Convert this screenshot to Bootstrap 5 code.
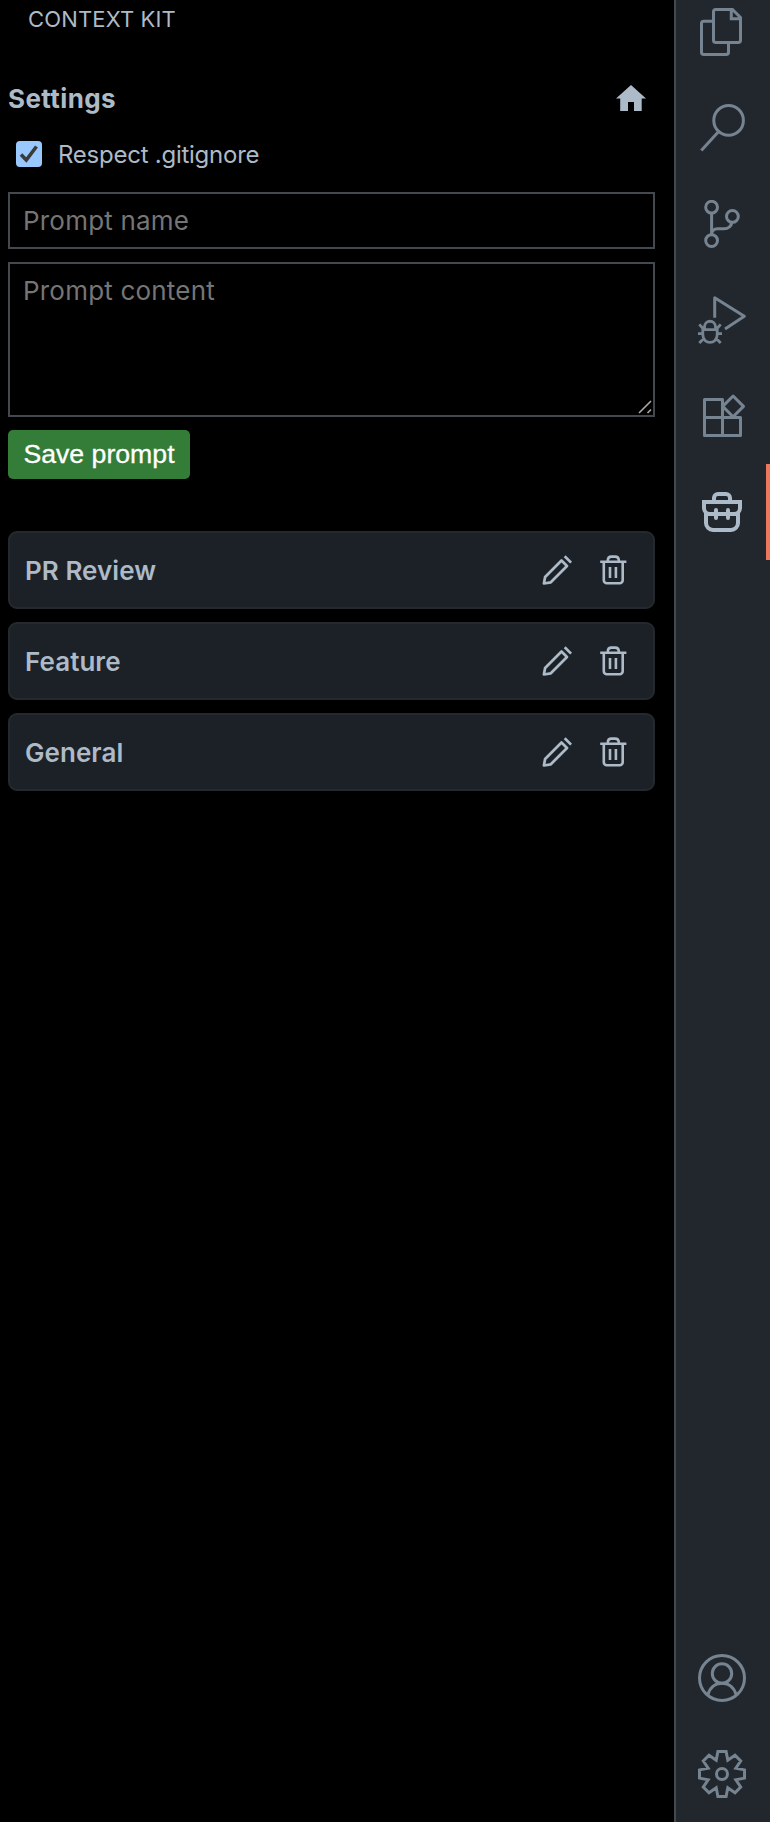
<!DOCTYPE html>
<html lang="en" data-bs-theme="dark">
<head>
<meta charset="utf-8">
<meta name="viewport" content="width=device-width, initial-scale=1">
<title>Context Kit</title>
<link href="https://cdn.jsdelivr.net/npm/bootstrap@5.3.0/dist/css/bootstrap.min.css" rel="stylesheet">
<style>
body { background: #000; color: #adbac7; font-family: Inter, "Liberation Sans", sans-serif; font-size: 26px; line-height: 32px; }
svg { display: block; flex: none; fill: none; stroke: currentColor; }
.panel-title { font-size: 22px; line-height: 38px; padding-left: 28px; letter-spacing: .15px; font-weight: 400; color: #adbac7; }
.panel-body { padding: 40px 19px 0 8px; }
.heading { font-size: 26px; line-height: 38px; padding-top: 2px; font-weight: 700; letter-spacing: .4px; color: #adbac7; }
.heading-row { height: 40px; padding-right: 9px; }
.check-row { height: 26px; margin: 23px 0 25px 8px; gap: 16px; }
.check-row .form-check-input { width: 26px; height: 26px; border: 0; border-radius: 4px; background-color: #99c8ff; background-size: 26px;
  background-image: url("data:image/svg+xml,%3Csvg xmlns='http://www.w3.org/2000/svg' viewBox='0 0 26 26'%3E%3Cpath d='M5 13.5l5.3 5.5L20.5 5.5' fill='none' stroke='%233b3b3b' stroke-width='3.6'/%3E%3C/svg%3E") !important; }
.check-row label { font-size: 24px; line-height: 26px; padding-top: 2px; letter-spacing: -.25px; }
.field.form-control { background: #000; border: 2px solid #444950; border-radius: 0; padding: 0 13px; font-size: 26px; line-height: 32px; color: #adbac7; resize: none; letter-spacing: .2px; }
.field::placeholder { color: #757575; opacity: 1; }
input.field.form-control { height: 57px; margin-bottom: 13px; }
textarea.field.form-control { height: 155px; padding-top: 11px; display: block; }
.grip { right: 3px; bottom: 3px; color: #aaa; }
.save.btn { margin-top: 13px; height: 49px; width: 182px; padding: 0 0 2px; border: 0; border-radius: 5px; background: #347d39; color: #fff; font: 26.67px/46px "Liberation Sans", Arial, sans-serif; -webkit-text-stroke: .3px #fff; }
.prompts { margin-top: 52px; gap: 13px; }
.prompt-card.card { height: 78px; border: 2px solid #25292e; border-radius: 9px; background: #1c2128; color: #adbac7; padding: 0 24px 0 15px; }
.prompt-name { font-weight: 600; letter-spacing: .05px; padding-top: 2px; }
.activity { width: 96px; background: #22272e; border-left: 2px solid #444950; color: #768390; }
.activity-top { margin-top: -16px; }
.item { height: 96px; padding-left: 22px; }
.item.active { color: #adbac7; border-right: 4px solid #ec775c; }
</style>
</head>
<body>
<div class="d-flex vh-100 overflow-hidden">
  <main class="flex-grow-1">
    <h1 class="panel-title m-0">CONTEXT KIT</h1>
    <div class="panel-body">
      <div class="heading-row d-flex align-items-center justify-content-between">
        <h2 class="heading m-0">Settings</h2>
        <svg width="30" height="26" viewBox="0 0 30 26"><path fill="currentColor" stroke="none" d="M15 0L30 13.5H25.7V26H18V17H12V26H4.2V13.5H0Z"/></svg>
      </div>
      <div class="check-row d-flex align-items-center">
        <input class="form-check-input m-0" type="checkbox" id="ignore" checked>
        <label for="ignore">Respect .gitignore</label>
      </div>
      <input class="field form-control" placeholder="Prompt name">
      <div class="position-relative">
        <textarea class="field form-control" placeholder="Prompt content"></textarea>
        <svg class="grip position-absolute" width="14" height="14" viewBox="0 0 14 14" stroke-width="1.6"><path d="M1 13L13 1M9.5 13L13 9.5"/></svg>
      </div>
      <button class="save btn d-block">Save prompt</button>
      <div class="prompts d-flex flex-column">
        <div class="prompt-card card flex-row align-items-center justify-content-between"><span class="prompt-name">PR Review</span><span class="d-flex actions"><svg width="32" height="32"><use href="#pencil"/></svg><svg class="ms-4" width="32" height="32"><use href="#trash"/></svg></span></div>
        <div class="prompt-card card flex-row align-items-center justify-content-between"><span class="prompt-name">Feature</span><span class="d-flex actions"><svg width="32" height="32"><use href="#pencil"/></svg><svg class="ms-4" width="32" height="32"><use href="#trash"/></svg></span></div>
        <div class="prompt-card card flex-row align-items-center justify-content-between"><span class="prompt-name">General</span><span class="d-flex actions"><svg width="32" height="32"><use href="#pencil"/></svg><svg class="ms-4" width="32" height="32"><use href="#trash"/></svg></span></div>
      </div>
    </div>
  </main>
  <nav class="activity d-flex flex-column justify-content-between flex-shrink-0">
    <div class="activity-top">
      <div class="item d-flex align-items-center"><svg width="48" height="48" stroke-width="3"><path d="M17.8 1.5H34.5L42.5 9.5V32.3A2.3 2.3 0 0 1 40.2 34.6H17.8A2.3 2.3 0 0 1 15.5 32.3V3.8A2.3 2.3 0 0 1 17.8 1.5ZM33.3 1.5V10.7H42.5M15.5 13.3H5.8A2.3 2.3 0 0 0 3.5 15.6V44.2A2.3 2.3 0 0 0 5.8 46.5H28.2A2.3 2.3 0 0 0 30.5 44.2V34.6"/></svg></div>
      <div class="item d-flex align-items-center"><svg width="48" height="48" stroke-width="3"><circle cx="30.6" cy="16.4" r="14.8"/><path d="M20.2 28L3.3 46.4"/></svg></div>
      <div class="item d-flex align-items-center"><svg width="48" height="48" stroke-width="3"><circle cx="13.6" cy="7.2" r="5.9"/><circle cx="34.4" cy="16.4" r="5.9"/><circle cx="13.6" cy="40.6" r="5.9"/><path d="M13.6 13V34.7C13.6 31 16 28.7 19.5 28.7H26C30.5 28.7 33 26.5 34 22.3"/></svg></div>
      <div class="item d-flex align-items-center"><svg width="48" height="48" stroke-width="3"><path stroke-linejoin="round" d="M16.7 21.8V1.8L46.3 20.3L27 33"/><path stroke-width="2.8" d="M4.8 33.6H19.2V38.5C19.2 49 4.8 49 4.800 38.500ZM6.5 33.600V31C6.500 23.300 17.500 23.300 17.500 31V33.600M5 32.500L1.300 28.400M19 32.500L22.700 28.400M0 37.700H5M19 37.700H24M6 42.300L1.300 47M18 42.300L22.700 47"/></svg></div>
      <div class="item d-flex align-items-center"><svg width="48" height="48" stroke-width="3" stroke-linejoin="round"><path d="M6.5 7.5H24.5V43.5H6.5ZM6.5 25.5H42.5V43.5H24.5M35.1 4L45.5 14.4L35.1 24.8L24.7 14.4Z"/></svg></div>
      <div class="item active d-flex align-items-center"><svg width="48" height="48" stroke-width="4"><path d="M16 13V10A4 4 0 0 1 20 6H28A4 4 0 0 1 32 10V13M6 14H42V20A6 6 0 0 1 36 26H12A6 6 0 0 1 6 20ZM8 25V35A7 7 0 0 0 15 42H33A7 7 0 0 0 40 35V25"/><path stroke-linecap="round" d="M18 22V30M30 22V30"/></svg></div>
    </div>
    <div>
      <div class="item d-flex align-items-center"><svg width="48" height="48" stroke-width="3"><circle cx="24" cy="24" r="22.5"/><circle cx="24" cy="19.5" r="9.7"/><path d="M9.8 41.3C11.5 33.5 17 29.2 24 29.2S36.5 33.5 38.2 41.3"/></svg></div>
      <div class="item d-flex align-items-center"><svg width="48" height="48" stroke-width="3"><circle cx="24" cy="24" r="5.5"/><path d="M19.9 1.5H28.1L29.8 10.2L37 5.3L42.7 11L37.8 18.2L46.5 19.9V28.1L37.8 29.8L42.7 37L37 42.7L29.8 37.8L28.1 46.5H19.9L18.2 37.8L11 42.7L5.3 37L10.2 29.8L1.5 28.1V19.9L10.2 18.2L5.3 11L11 5.3L18.2 10.2Z"/></svg></div>
    </div>
  </nav>
</div>
<svg width="0" height="0" class="position-absolute" aria-hidden="true">
  <symbol id="pencil" viewBox="0 0 32 32"><path stroke-width="2.7" stroke-linejoin="round" d="M23.7 2.2L30.1 8.6M20.5 6.5L26 12L9.8 28.300L2.900 29.500L4.100 23Z"/></symbol>
  <symbol id="trash" viewBox="0 0 32 32"><path stroke-width="2.6" d="M3.2 7.7H29.4M10.8 7.7V6.5C10.8 3.5 12.5 2.6 14.5 2.6H18C20.4 2.6 21.8 4 21.8 6.5V7.7M6.8 7.7V26.3A3 3 0 0 0 9.8 29.3H22.7A3 3 0 0 0 25.7 26.3V7.7M13 13V24M18.9 13V24"/></symbol>
</svg>
<script src="https://cdn.jsdelivr.net/npm/bootstrap@5.3.0/dist/js/bootstrap.bundle.min.js"></script>
</body>
</html>
